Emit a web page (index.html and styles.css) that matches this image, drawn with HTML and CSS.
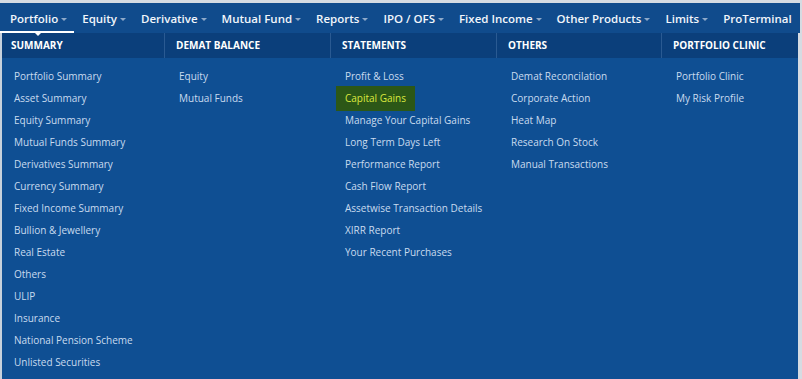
FILE: index.html
```
<!doctype html>
<html lang="en">
<head>
<meta charset="utf-8">
<title>Portfolio menu</title>
<link rel="stylesheet" href="styles.css">
</head>
<body>
	<div class="topnav">
		<div class="navitem active">Portfolio<span class="caret"></span></div>
		<div class="navitem">Equity<span class="caret"></span></div>
		<div class="navitem">Derivative<span class="caret"></span></div>
		<div class="navitem">Mutual Fund<span class="caret"></span></div>
		<div class="navitem">Reports<span class="caret"></span></div>
		<div class="navitem">IPO / OFS<span class="caret"></span></div>
		<div class="navitem">Fixed Income<span class="caret"></span></div>
		<div class="navitem">Other Products<span class="caret"></span></div>
		<div class="navitem">Limits<span class="caret"></span></div>
		<div class="navitem">ProTerminal</div>
	</div>

	<div class="megamenu">
		<div class="col">
			<div class="colhead">Summary</div>
			<ul class="links">
				<li><a href="#">Portfolio Summary</a></li>
				<li><a href="#">Asset Summary</a></li>
				<li><a href="#">Equity Summary</a></li>
				<li><a href="#">Mutual Funds Summary</a></li>
				<li><a href="#">Derivatives Summary</a></li>
				<li><a href="#">Currency Summary</a></li>
				<li><a href="#">Fixed Income Summary</a></li>
				<li><a href="#">Bullion &amp; Jewellery</a></li>
				<li><a href="#">Real Estate</a></li>
				<li><a href="#">Others</a></li>
				<li><a href="#">ULIP</a></li>
				<li><a href="#">Insurance</a></li>
				<li><a href="#">National Pension Scheme</a></li>
				<li><a href="#">Unlisted Securities</a></li>
			</ul>
		</div>
		<div class="col">
			<div class="colhead">Demat Balance</div>
			<ul class="links">
				<li><a href="#">Equity</a></li>
				<li><a href="#">Mutual Funds</a></li>
			</ul>
		</div>
		<div class="col">
			<div class="colhead">Statements</div>
			<ul class="links">
				<li><a href="#">Profit &amp; Loss</a></li>
				<li><a href="#" class="current">Capital Gains</a></li>
				<li><a href="#">Manage Your Capital Gains</a></li>
				<li><a href="#">Long Term Days Left</a></li>
				<li><a href="#">Performance Report</a></li>
				<li><a href="#">Cash Flow Report</a></li>
				<li><a href="#">Assetwise Transaction Details</a></li>
				<li><a href="#">XIRR Report</a></li>
				<li><a href="#">Your Recent Purchases</a></li>
			</ul>
		</div>
		<div class="col">
			<div class="colhead">Others</div>
			<ul class="links">
				<li><a href="#">Demat Reconcilation</a></li>
				<li><a href="#">Corporate Action</a></li>
				<li><a href="#">Heat Map</a></li>
				<li><a href="#">Research On Stock</a></li>
				<li><a href="#">Manual Transactions</a></li>
			</ul>
		</div>
		<div class="col last">
			<div class="colhead">Portfolio Clinic</div>
			<ul class="links">
				<li><a href="#">Portfolio Clinic</a></li>
				<li><a href="#">My Risk Profile</a></li>
			</ul>
		</div>
	</div>
</body>
</html>
```

FILE: styles.css
```
body, html {
	margin: 0;
	background: #d5dbe2;
}

body {
	padding-top: 3px;
	font-family: "Open Sans", "Liberation Sans", sans-serif;
	width: 800px;
	height: 376px;
	overflow: hidden;
}

/* top nav */
.topnav {
	display: flex;
	height: 30px;
	background: #104b8c;
	padding-left: 2px;
}
.navitem {
	position: relative;
	display: flex;
	align-items: center;
	padding: 0 7px 0 8px;
	font-size: 11.5px;
	font-weight: 600;
	color: #f2f6fb;
	white-space: nowrap;
}
.caret {
	display: inline-block;
	margin-left: 3px;
	margin-top: 2px;
	border-left: 3px solid transparent;
	border-right: 3px solid transparent;
	border-top: 3px solid #8ea9c9;
}
.navitem.active {
	margin-left: -2px;
	padding-left: 10px;
	box-shadow: inset 0 -2px 0 #ffffff;
}
.navitem.active::after {
	content: "";
	position: absolute;
	left: 35px;
	bottom: -3px;
	border-left: 3px solid transparent;
	border-right: 3px solid transparent;
	border-top: 3px solid #ffffff;
	z-index: 2;
}

/* mega menu */
.megamenu {
	display: grid;
	grid-template-columns: 165px 166px 166px 165px 1fr;
	height: 346px;
	margin-right: 2px;
	background: #0f4f93;
	box-shadow: inset 2px 0 0 #c7d1dc;
}
.colhead {
	height: 25px;
	line-height: 25px;
	padding-left: 11px;
	background: #0b3f7b;
	border-right: 1px solid #2a5a92;
	font-size: 10px;
	font-weight: 700;
	text-transform: uppercase;
	color: #ffffff;
}
.col.last .colhead {
	border-right: none;
}
.col:first-child .colhead {
	margin-left: 2px;
	padding-left: 9px;
}

.links {
	list-style: none;
	margin: 0;
	padding: 7px 0 0 5px;
}
.links li {
	display: flex;
	align-items: center;
	height: 22px;
}
.links a {
	display: inline-block;
	padding: 0 9px;
	font-size: 10px;
	line-height: 22px;
	color: #c9dbef;
	text-decoration: none;
	white-space: nowrap;
}
.links a.current {
	line-height: 25px;
	background: #2c5717;
	color: #dbe93f;
}
```
